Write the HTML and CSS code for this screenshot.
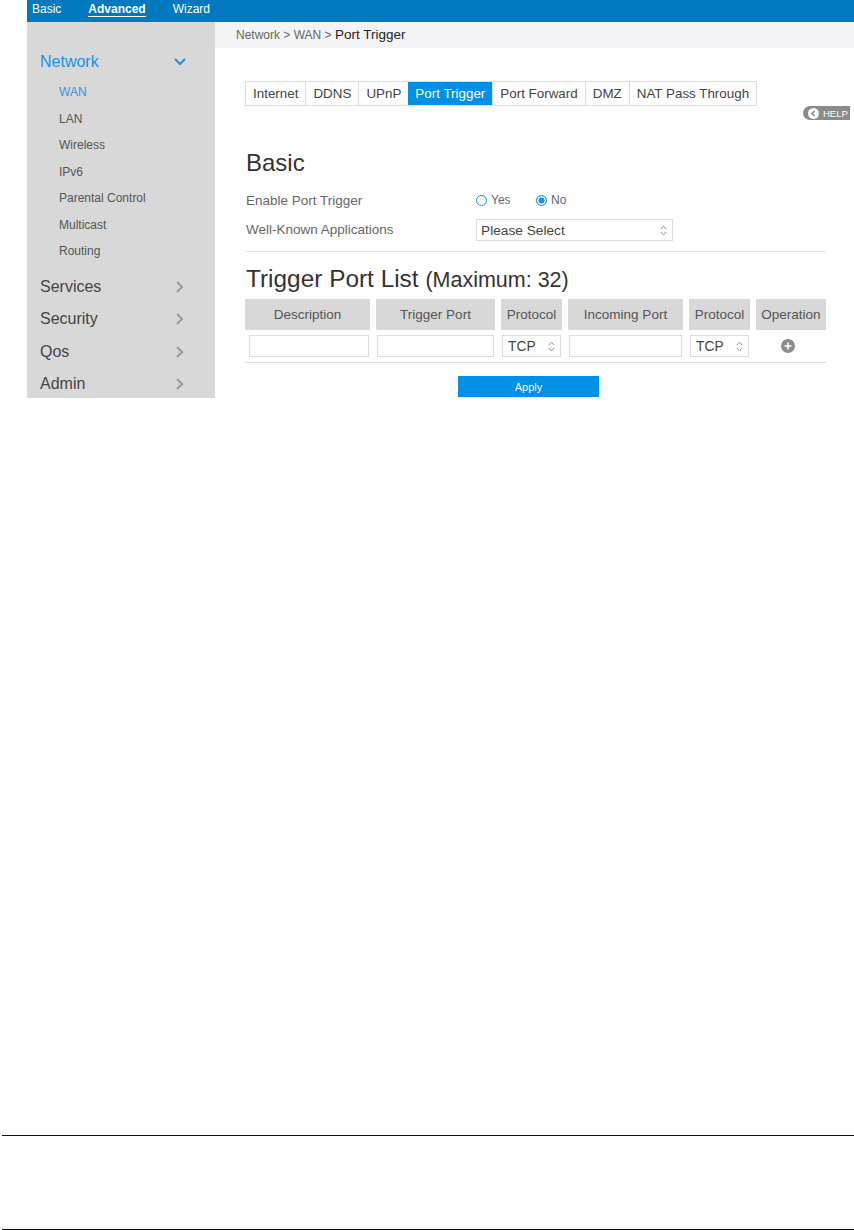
FILE: index.html
```html
<!doctype html>
<html lang="en">
<head>
<title>Port Trigger</title>
<meta charset="utf-8">
<link rel="stylesheet" href="styles.css">
</head>
<body>

<div class="app">
	<header class="topbar">
		<a>Basic</a>
		<a class="active">Advanced</a>
		<a>Wizard</a>
	</header>
	<div class="layout">
		<aside class="sidebar">
			<div class="group open">
				<span>Network</span>
				<svg width="12" height="8" viewBox="0 0 12 8"><path d="M1 1l5 5 5-5" fill="none" stroke="#1a90e6" stroke-width="2"/></svg>
			</div>
			<ul class="submenu">
				<li class="current">WAN</li>
				<li>LAN</li>
				<li>Wireless</li>
				<li>IPv6</li>
				<li>Parental Control</li>
				<li>Multicast</li>
				<li>Routing</li>
			</ul>
			<div class="group">
				<span>Services</span>
				<svg width="8" height="12" viewBox="0 0 8 12"><path d="M1 1l5 5-5 5" fill="none" stroke="#999" stroke-width="2"/></svg>
			</div>
			<div class="group">
				<span>Security</span>
				<svg width="8" height="12" viewBox="0 0 8 12"><path d="M1 1l5 5-5 5" fill="none" stroke="#999" stroke-width="2"/></svg>
			</div>
			<div class="group">
				<span>Qos</span>
				<svg width="8" height="12" viewBox="0 0 8 12"><path d="M1 1l5 5-5 5" fill="none" stroke="#999" stroke-width="2"/></svg>
			</div>
			<div class="group">
				<span>Admin</span>
				<svg width="8" height="12" viewBox="0 0 8 12"><path d="M1 1l5 5-5 5" fill="none" stroke="#999" stroke-width="2"/></svg>
			</div>
		</aside>
		<main class="content">
			<div class="crumbs">Network &gt; WAN &gt; <b>Port Trigger</b></div>
			<div class="panel">
				<nav class="tabs">
					<a>Internet</a>
					<a>DDNS</a>
					<a>UPnP</a>
					<a class="active">Port Trigger</a>
					<a>Port Forward</a>
					<a>DMZ</a>
					<a>NAT Pass Through</a>
				</nav>
				<a class="help">
					<svg width="11" height="11" viewBox="0 0 11 11"><circle cx="5.5" cy="5.5" r="5.5" fill="#fff"/><path d="M6.5 3L4 5.5 6.5 8" fill="none" stroke="#8a8a8a" stroke-width="1.6"/></svg>
					HELP
				</a>
				<h2>Basic</h2>
				<div class="field">
					<label>Enable Port Trigger</label>
					<span class="radio"><i></i>Yes</span>
					<span class="radio on"><i></i>No</span>
				</div>
				<div class="field second">
					<label>Well-Known Applications</label>
					<div class="select wide">Please Select
						<svg width="7" height="11" viewBox="0 0 7 11"><path d="M.8 4L3.5 1.2 6.2 4M.8 7l2.7 2.8L6.2 7" fill="none" stroke="#888"/></svg>
					</div>
				</div>
				<h2 class="list-title">Trigger Port List <small>(Maximum: 32)</small></h2>
				<div class="grid">
					<div class="th">Description</div>
					<div class="th">Trigger Port</div>
					<div class="th">Protocol</div>
					<div class="th">Incoming Port</div>
					<div class="th">Protocol</div>
					<div class="th">Operation</div>
					<div class="td first"><div class="input"></div></div>
					<div class="td"><div class="input"></div></div>
					<div class="td"><div class="select">TCP
						<svg width="7" height="11" viewBox="0 0 7 11"><path d="M.8 4L3.5 1.2 6.2 4M.8 7l2.7 2.8L6.2 7" fill="none" stroke="#888"/></svg>
					</div></div>
					<div class="td"><div class="input"></div></div>
					<div class="td"><div class="select">TCP
						<svg width="7" height="11" viewBox="0 0 7 11"><path d="M.8 4L3.5 1.2 6.2 4M.8 7l2.7 2.8L6.2 7" fill="none" stroke="#888"/></svg>
					</div></div>
					<div class="td center">
						<svg width="14" height="14" viewBox="0 0 14 14"><circle cx="7" cy="7" r="7" fill="#8c8c8c"/><path d="M7 3.5v7M3.5 7h7" stroke="#fff" stroke-width="1.6"/></svg>
					</div>
				</div>
				<div class="actions"><button type="button">Apply</button></div>
			</div>
		</main>
	</div>
</div>

<hr class="rule first">
<hr class="rule last">

</body>
</html>
```

FILE: styles.css
```css
html, body {
	margin: 0;
	height: 1230px;
	overflow: hidden;
	background: #fff;
}
body {
	font-family: "Liberation Sans", Arial, sans-serif;
	color: #444;
}
.app {
	margin-left: 27px;
	height: 398px;
}
.topbar {
	display: flex;
	height: 22px;
	background: #0079c1;
	color: #fff;
	font-size: 12px;
	line-height: 19px;
}
.topbar a {
	margin-left: 5px;
	margin-right: 22px;
}
.topbar a.active {
	font-weight: bold;
	align-self: flex-start;
	height: 16px;
	line-height: 19px;
	border-bottom: 1px solid #fff;
}
.layout {
	display: flex;
	height: 376px;
}
.sidebar {
	width: 188px;
	background: #d8d8d8;
	padding-top: 27px;
	box-sizing: border-box;
}
.group {
	display: flex;
	justify-content: space-between;
	align-items: center;
	height: 32.5px;
	padding: 0 31px 0 13px;
	font-size: 16px;
	color: #444;
}
.group.open {
	height: 25px;
	color: #1a90e6;
	padding-right: 29px;
}
.submenu {
	list-style: none;
	margin: 5px 0 6.2px;
	padding: 0 0 0 32px;
	font-size: 12px;
	color: #555;
}
.submenu li {
	height: 26.5px;
	line-height: 26.5px;
}
.submenu .current {
	color: #3a8fe0;
}
.content {
	flex: 1;
	min-width: 0;
}
.crumbs {
	height: 26px;
	line-height: 26px;
	padding-left: 21px;
	background: #f4f4f6;
	font-size: 12px;
	color: #666;
}
.crumbs b {
	font-weight: normal;
	font-size: 13.5px;
	color: #222;
}
.panel {
	position: relative;
	padding: 33px 28px 0 30px;
}
.tabs {
	display: inline-flex;
	border: 1px solid #ddd;
	height: 23px;
	font-size: 13.4px;
	line-height: 23px;
	color: #444;
}
.tabs a {
	padding: 0 7px;
	border-left: 1px solid #ddd;
}
.tabs a:first-child {
	border-left: 0;
}
.tabs a.active {
	background: #0090e6;
	color: #fff;
	border-left: 0;
}
.help {
	position: absolute;
	top: 58px;
	right: 4px;
	display: flex;
	align-items: center;
	gap: 4px;
	width: 47px;
	height: 14px;
	box-sizing: border-box;
	padding-left: 5px;
	border-radius: 7px 0 0 7px;
	background: #8a8a8a;
	color: #fff;
	font-size: 9.5px;
}
h2 {
	margin: 0;
	padding-left: 1px;
	font-weight: normal;
	color: #333;
}
.panel > h2:first-of-type {
	margin-top: 44px;
	font-size: 24px;
	line-height: 26px;
}
.field {
	display: flex;
	align-items: center;
	margin-top: 14px;
	height: 20px;
	font-size: 13.5px;
	color: #666;
}
.field.second {
	margin-top: 9px;
	height: 22px;
	padding-bottom: 10px;
	border-bottom: 1px solid #e2e2e2;
}
.field.second label {
	margin-top: -2px;
}
.field label {
	width: 230px;
	padding-left: 1px;
}
.radio {
	display: flex;
	align-items: center;
	gap: 4px;
	width: 60px;
	font-size: 12px;
}
.radio i {
	width: 9px;
	height: 9px;
	border: 1.3px solid #1a90e6;
	border-radius: 50%;
}
.radio.on i {
	background: #1a90e6;
	box-shadow: inset 0 0 0 1.5px #fff;
}
.select {
	display: flex;
	justify-content: space-between;
	align-items: center;
	box-sizing: border-box;
	height: 22px;
	padding: 0 5px;
	border: 1px solid #ddd;
	font-size: 13.7px;
	color: #444;
}
.select.wide {
	width: 197px;
	padding-left: 4px;
}
h2.list-title {
	margin-top: 14px;
	font-size: 24.4px;
	line-height: 26px;
}
h2.list-title small {
	font-size: 21.5px;
}
.grid {
	display: grid;
	grid-template-columns: 125px 119px 61px 115px 61px 70px;
	column-gap: 6px;
	margin-top: 6px;
	padding-bottom: 5px;
	border-bottom: 1px solid #ddd;
}
.th {
	height: 31px;
	line-height: 31px;
	background: #d8d8d8;
	text-align: center;
	font-size: 13.5px;
	color: #555;
}
.td {
	padding: 5px 1px 0;
}
.td.first {
	padding-left: 4px;
}
.td .input {
	height: 22px;
	box-sizing: border-box;
	border: 1px solid #ddd;
}
.td .select {
	font-size: 13.8px;
}
.td.center {
	display: flex;
	justify-content: center;
	align-items: center;
	padding: 5px 6px 0 0;
}
.actions {
	display: flex;
	justify-content: center;
	margin-top: 13px;
	padding-right: 14px;
}
.actions button {
	width: 141px;
	height: 21px;
	padding: 0;
	border: 0;
	background: #0090e6;
	color: #fff;
	font: 11px "Liberation Sans", Arial, sans-serif;
}
.rule {
	margin: 0 0 0 2px;
	border: 0;
	border-top: 1px solid #111;
}
.rule.first {
	margin-top: 737px;
}
.rule.last {
	margin-top: 93px;
}
```
